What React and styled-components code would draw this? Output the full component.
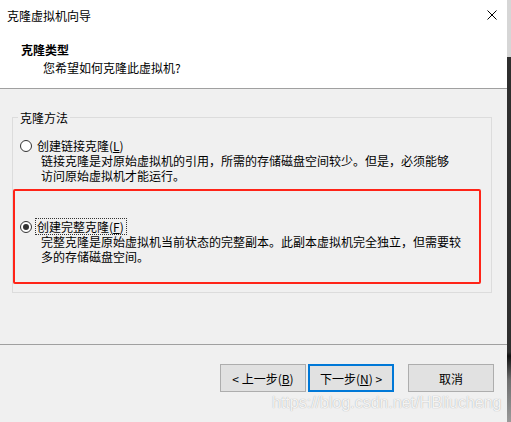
import React from 'react';
import styled, { createGlobalStyle } from 'styled-components';

const GlobalStyle = createGlobalStyle`
  html, body {
    margin: 0;
    padding: 0;
    background: #2b2b2b;
  }
  body {
    font-family: "Noto Sans CJK SC", "Liberation Sans", sans-serif;
    font-size: 12px;
    color: #000;
  }
`;

const Screen = styled.div`
  display: flex;
  width: 511px;
  height: 422px;
  overflow: hidden;
`;

const Dialog = styled.div`
  position: relative;
  width: 507px;
  height: 422px;
  display: flex;
  flex-direction: column;
  background: #f0f0f0;
`;

const EdgeStrip = styled.div`
  width: 4px;
  height: 422px;
  background: linear-gradient(
    to bottom,
    #d6d6d6 0px,
    #d6d6d6 57px,
    #2e2e2e 57px,
    #2e2e2e 352px,
    #111 356px,
    #6e6e6e 380px,
    #9a9a9a 422px
  );
`;

const Header = styled.div`
  height: 88px;
  background: #fff;
  border-bottom: 1px solid #a0a0a0;
`;

const TitleBar = styled.div`
  height: 30px;
  display: flex;
  align-items: center;
  justify-content: space-between;
  padding: 0 10px 1px 7px;
  line-height: 15px;
`;

const CloseIcon = styled.svg`
  width: 10px;
  height: 10px;
  margin-top: -1px;
`;

const HeaderContent = styled.div`
  padding: 11px 0 0 21px;
  line-height: 15px;
`;

const PageTitle = styled.div`
  font-weight: bold;
`;

const PageSubtitle = styled.div`
  margin-top: 3px;
  padding-left: 22px;
`;

const Body = styled.div`
  flex: 1;
`;

const Group = styled.fieldset`
  box-sizing: border-box;
  width: 480px;
  margin: 21px 0 0 12px;
  padding: 13px 0 8px 0;
  border: 1px solid #dcdcdc;
  min-inline-size: 0;
`;

const GroupLegend = styled.legend`
  margin-left: 5px;
  padding: 0 2px;
  line-height: 15px;
`;

const Option = styled.div`
  padding-left: ${(p) => p.$indent}px;
`;

const OptionRow = styled.div`
  display: flex;
  align-items: center;
  height: 15px;
`;

const Radio = styled.span`
  box-sizing: border-box;
  width: 12px;
  height: 12px;
  border: 1px solid #333;
  border-radius: 50%;
  background: #fff;
  display: flex;
  align-items: center;
  justify-content: center;
  flex-shrink: 0;

  &::after {
    content: '';
    width: 6px;
    height: 6px;
    border-radius: 50%;
    background: ${(p) => (p.$checked ? '#333' : 'transparent')};
  }
`;

const OptionLabel = styled.span`
  margin-left: 3px;
  padding: 0 2px 0 1px;
  line-height: 15px;
  border: 1px ${(p) => (p.$focused ? 'dotted #333' : 'solid transparent')};
`;

const Description = styled.div`
  padding-left: ${(p) => p.$indent}px;
  line-height: 15px;
`;

const Highlight = styled.div`
  box-sizing: border-box;
  width: 468px;
  margin-top: 6px;
  padding: 28px 0 18px 0;
  border: 2px solid #ff2418;
  border-radius: 2px;
`;

const Footer = styled.div`
  height: 58px;
  border-top: 1px solid #a0a0a0;
  display: flex;
  justify-content: flex-end;
  align-items: flex-start;
  padding: 19px 13px 0 0;
  box-sizing: content-box;
`;

const Button = styled.button`
  box-sizing: border-box;
  width: 86px;
  height: 28px;
  margin-left: ${(p) => p.$gap}px;
  padding: 0;
  background: #e1e1e1;
  border: ${(p) => (p.$primary ? '2px solid #0078d7' : '1px solid #adadad')};
  font-family: "Noto Sans CJK SC", "Liberation Sans", sans-serif;
  font-size: 12px;
  color: #000;
  line-height: 15px;
`;

const Watermark = styled.div`
  position: absolute;
  left: 272px;
  top: 394px;
  font-family: "Liberation Sans", Arial, sans-serif;
  font-size: 16px;
  line-height: 18px;
  color: rgba(255, 255, 255, 0.88);
  text-shadow: 0 0 1px rgba(0, 0, 0, 0.35);
  white-space: nowrap;
  pointer-events: none;
`;

export default function App() {
  return (
    <Screen>
      <GlobalStyle />
      <Dialog>
        <Header>
          <TitleBar>
            <span>克隆虚拟机向导</span>
            <CloseIcon viewBox="0 0 10 10">
              <path d="M0.5 0.5 L9.5 9.5 M9.5 0.5 L0.5 9.5" stroke="#000" strokeWidth="1" fill="none" />
            </CloseIcon>
          </TitleBar>
          <HeaderContent>
            <PageTitle>克隆类型</PageTitle>
            <PageSubtitle>您希望如何克隆此虚拟机?</PageSubtitle>
          </HeaderContent>
        </Header>

        <Body>
          <Group>
            <GroupLegend>克隆方法</GroupLegend>
            <Option $indent={7}>
              <OptionRow>
                <Radio />
                <OptionLabel>创建链接克隆(<u>L</u>)</OptionLabel>
              </OptionRow>
            </Option>
            <Description $indent={28}>
              链接克隆是对原始虚拟机的引用，所需的存储磁盘空间较少。但是，必须能够
              <br />
              访问原始虚拟机才能运行。
            </Description>

            <Highlight>
              <Option $indent={5}>
                <OptionRow>
                  <Radio $checked />
                  <OptionLabel $focused>创建完整克隆(<u>F</u>)</OptionLabel>
                </OptionRow>
              </Option>
              <Description $indent={26}>
                完整克隆是原始虚拟机当前状态的完整副本。此副本虚拟机完全独立，但需要较
                <br />
                多的存储磁盘空间。
              </Description>
            </Highlight>
          </Group>
        </Body>

        <Footer>
          <Button $gap={0}>&lt; 上一步(<u>B</u>)</Button>
          <Button $gap={2} $primary>下一步(<u>N</u>) &gt;</Button>
          <Button $gap={14}>取消</Button>
        </Footer>

        <Watermark>https://blog.csdn.net/HBliucheng</Watermark>
      </Dialog>
      <EdgeStrip />
    </Screen>
  );
}
